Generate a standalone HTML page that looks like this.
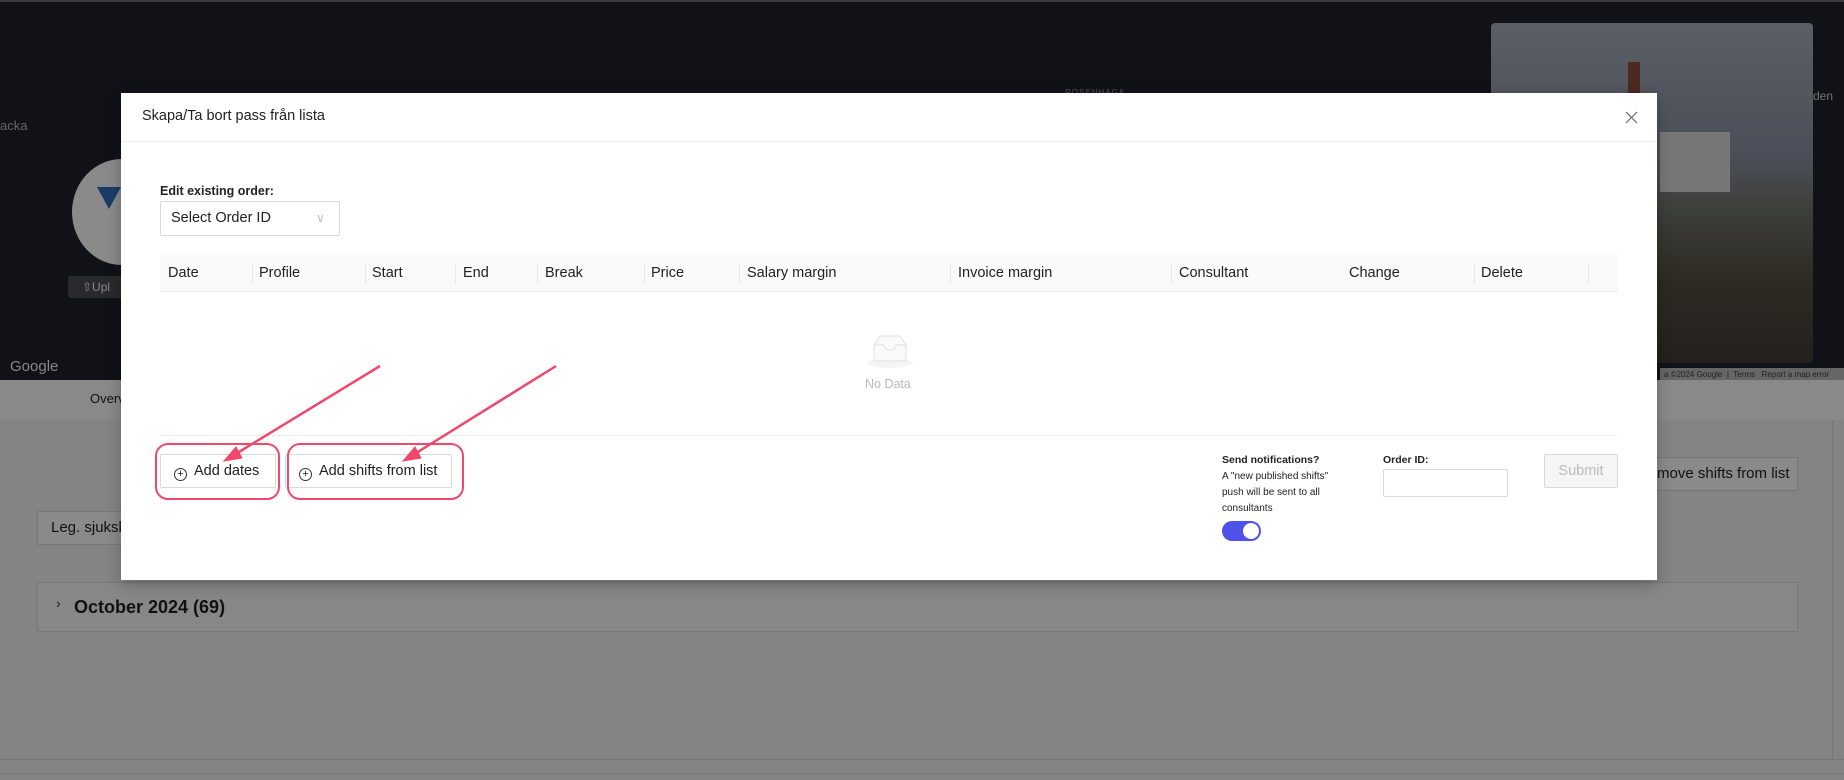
<!DOCTYPE html>
<html><head><meta charset="utf-8"><style>
*{box-sizing:border-box;margin:0;padding:0}
body{width:1844px;height:780px;overflow:hidden;position:relative;background:#848484;font-family:"Liberation Sans",Arial,sans-serif;color:#222}
.a{position:absolute}
.map{left:0;top:0;width:1844px;height:380px;background:#111118;border-top:2px solid #3a3a40}
.nav{left:0;top:380px;width:1844px;height:40px;background:#898989}
.bbtn{background:#8a8a8a;border:1px solid #777;font-size:15px;color:#111}
.modal{left:121px;top:93px;width:1536px;height:487px;background:#fff;box-shadow:0 4px 14px rgba(0,0,0,.25)}
.th{position:absolute;top:0;height:37px;line-height:37px;font-size:14.5px;color:#222}
.sep{position:absolute;top:8px;width:1px;height:21px;background:#e8e8e8}
.btn{position:absolute;height:34px;border:1px solid #d9d9d9;background:#fff;font-size:14.5px;line-height:32px;color:#222;border-radius:2px}
.ring{position:absolute;border:2.5px solid #f0476a;border-radius:13px}
.pl{display:inline-block;width:13px;height:13px;border:1px solid #333;border-radius:50%;font-size:11px;line-height:11px;text-align:center;vertical-align:-2px;margin-right:7px}
</style></head><body>
<div class="a map">
  <div class="a" style="left:0;top:116px;color:#666;font-size:13px">acka</div>
  <div class="a" style="left:1065px;top:86px;color:#555;font-size:8px;letter-spacing:1px">ROSENHAGA</div>
  <div class="a" style="left:72px;top:157px;width:100px;height:106px;border-radius:50%;background:#8a8a8a"></div>
  <div class="a" style="left:97px;top:185px;width:0;height:0;border-left:12px solid transparent;border-right:12px solid transparent;border-top:22px solid #1a3c66"></div>
  <div class="a" style="left:68px;top:274px;width:60px;height:22px;background:#2a2a2e;border-radius:3px;color:#888;font-size:12px;line-height:22px;padding-left:14px">⇧Upl</div>
  <div class="a" style="left:10px;top:356px;color:#888;font-size:15px">Google</div>
  <div class="a" style="left:1491px;top:21px;width:322px;height:340px;border-radius:4px;background:linear-gradient(180deg,#5a5e66 0%,#4a4e58 40%,#3d3f3a 55%,#2e2a24 75%,#24201c 100%)"></div>
  <div class="a" style="left:1628px;top:60px;width:12px;height:60px;background:#4a2a22"></div>
  <div class="a" style="left:1660px;top:130px;width:70px;height:60px;background:#777"></div>
  <div class="a" style="left:1813px;top:87px;color:#777;font-size:12px">den</div>
  <div class="a" style="left:1660px;top:366px;width:184px;height:14px;background:#666;color:#222;font-size:8px;line-height:14px;padding-left:4px">a ©2024 Google &nbsp;|&nbsp; Terms &nbsp; Report a map error</div>
</div>
<div class="a nav"><div class="a" style="left:90px;top:11px;font-size:13px;color:#111">Overv</div></div>
<div class="a bbtn" style="left:1648px;top:457px;width:150px;height:34px;line-height:32px;padding-left:8px">move shifts from list</div>
<div class="a bbtn" style="left:37px;top:511px;width:100px;height:34px;line-height:32px;padding-left:13px">Leg. sjuksk</div>
<div class="a" style="left:37px;top:582px;width:1761px;height:50px;border:1px solid #777;background:#878787">
  <div class="a" style="left:18px;top:12px;font-size:14px">›</div>
  <div class="a" style="left:36px;top:14px;font-size:18px;font-weight:bold;color:#111">October 2024 (69)</div>
</div>
<div class="a" style="left:0;top:759px;width:1844px;height:1px;background:#777"></div>
<div class="a" style="left:0;top:773px;width:1844px;height:1px;background:#777"></div>
<div class="a" style="left:1832px;top:420px;width:1px;height:340px;background:#777"></div>

<div class="a modal">
  <div class="a" style="left:21px;top:15px;font-size:14.5px;color:#222">Skapa/Ta bort pass från lista</div>
  <svg class="a" style="left:1504px;top:18px" width="13" height="13" viewBox="0 0 13 13"><path d="M1 1L12 12M12 1L1 12" stroke="#666" stroke-width="1.2"/></svg>
  <div class="a" style="left:0;top:48px;width:1536px;height:1px;background:#eee"></div>
  <div class="a" style="left:39px;top:91px;font-size:12.5px;font-weight:bold">Edit existing order:</div>
  <div class="a" style="left:39px;top:108px;width:180px;height:35px;border:1px solid #d9d9d9;border-radius:2px;font-size:14.5px;line-height:33px;padding-left:10px">Select Order ID<span class="a" style="left:155px;top:0;color:#bbb;font-size:12px">∨</span></div>
  <div class="a" style="left:39px;top:162px;width:1458px;height:37px;background:#fafafa;border-bottom:1px solid #ececec">
    <div class="th" style="left:8px">Date</div><div class="sep" style="left:92px"></div>
    <div class="th" style="left:99px">Profile</div><div class="sep" style="left:205px"></div>
    <div class="th" style="left:212px">Start</div><div class="sep" style="left:295px"></div>
    <div class="th" style="left:303px">End</div><div class="sep" style="left:377px"></div>
    <div class="th" style="left:385px">Break</div><div class="sep" style="left:484px"></div>
    <div class="th" style="left:491px">Price</div><div class="sep" style="left:579px"></div>
    <div class="th" style="left:587px">Salary margin</div><div class="sep" style="left:790px"></div>
    <div class="th" style="left:798px">Invoice margin</div><div class="sep" style="left:1011px"></div>
    <div class="th" style="left:1019px">Consultant</div>
    <div class="th" style="left:1189px">Change</div><div class="sep" style="left:1314px"></div>
    <div class="th" style="left:1321px">Delete</div><div class="sep" style="left:1428px"></div>
  </div>
  <svg class="a" style="left:745px;top:240px" width="48" height="36" viewBox="0 0 48 36"><ellipse cx="24" cy="30" rx="23" ry="5" fill="#f5f5f5"/><path d="M8 12 L14 3 H34 L40 12 V28 H8 Z" fill="#fafafa" stroke="#e0e0e0"/><path d="M8 12 H18 Q18 17 24 17 Q30 17 30 12 H40" fill="none" stroke="#e0e0e0"/></svg>
  <div class="a" style="left:744px;top:284px;font-size:12.5px;color:#bbb">No Data</div>
  <div class="a" style="left:39px;top:342px;width:1458px;height:1px;background:#eee"></div>
  <div class="btn" style="left:39px;top:361px;width:116px;padding-left:13px"><span class="pl">+</span>Add dates</div>
  <div class="btn" style="left:164px;top:361px;width:167px;padding-left:13px"><span class="pl">+</span>Add shifts from list</div>
  <div class="a" style="left:1101px;top:361px;font-size:10.5px;font-weight:bold">Send notifications?</div>
  <div class="a" style="left:1101px;top:376px;font-size:10px;line-height:16px;width:120px">A "new published shifts" push will be sent to all consultants</div>
  <div class="a" style="left:1101px;top:428px;width:39px;height:20px;border-radius:10px;background:#4f52e8"><div class="a" style="left:21px;top:2px;width:16px;height:16px;border-radius:50%;background:#fff"></div></div>
  <div class="a" style="left:1262px;top:361px;font-size:10.5px;font-weight:bold">Order ID:</div>
  <div class="a" style="left:1262px;top:376px;width:125px;height:28px;border:1px solid #d9d9d9;border-radius:2px"></div>
  <div class="btn" style="left:1423px;top:361px;width:74px;background:#f5f5f5;color:#bbb;text-align:center">Submit</div>
</div>
<div class="ring" style="left:155px;top:443px;width:125px;height:57px"></div>
<div class="ring" style="left:287px;top:443px;width:177px;height:57px"></div>
<svg class="a" style="left:0;top:0" width="1844" height="780"><g stroke="#f0476a" stroke-width="2.5" fill="#f0476a"><line x1="380" y1="366" x2="234" y2="455"/><polygon points="224,461 236,447 242,458" stroke-width="1"/><line x1="556" y1="366" x2="413" y2="455"/><polygon points="403,461 415,447 421,458" stroke-width="1"/></g></svg>
</body></html>
